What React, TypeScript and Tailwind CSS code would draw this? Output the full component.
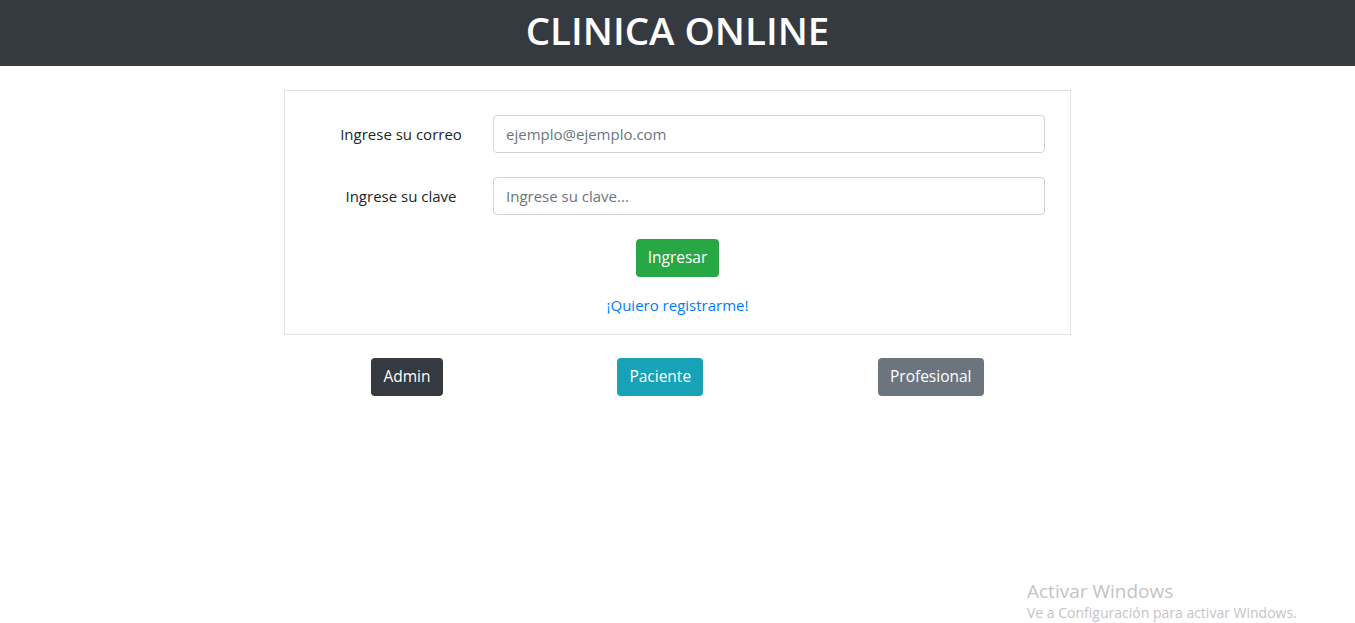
import React from "react";

const font = { fontFamily: '"Segoe UI", "Open Sans", sans-serif' };

function Field({ label, placeholder, type }: { label: string; placeholder: string; type: string }) {
  return (
    <div className="flex items-center">
      <label className="w-[184px] text-center text-[15px] text-[#212529]">{label}</label>
      <input
        type={type}
        placeholder={placeholder}
        className="h-[38px] w-[552px] rounded-[4px] border border-[#ced4da] bg-white px-3 text-[15px] text-[#495057] outline-none placeholder:text-[#6c757d]"
      />
    </div>
  );
}

export default function App() {
  return (
    <div className="relative min-h-[623px] bg-white" style={font}>
      <header className="flex h-[66px] items-center justify-center bg-[#343a40] pb-[5px]">
        <h1 className="text-[38.5px] font-semibold leading-none text-white">CLINICA ONLINE</h1>
      </header>

      <div className="mx-auto mt-[24px] w-[787px]">
        <div className="flex flex-col gap-[24px] border border-[#dee2e6] pb-[17px] pl-[24px] pt-[24px]">
          <Field label="Ingrese su correo" placeholder="ejemplo@ejemplo.com" type="email" />
          <Field label="Ingrese su clave" placeholder="Ingrese su clave..." type="password" />
          <div className="flex flex-col items-center gap-[16px] pr-[24px]">
            <button className="h-[38px] rounded-[4px] bg-[#28a745] px-3 text-[15.5px] text-white">Ingresar</button>
            <a href="#" className="text-[15px] leading-[24px] text-[#007bff]">¡Quiero registrarme!</a>
          </div>
        </div>

        <div className="mt-[23px] flex justify-around">
          <button className="h-[38px] rounded-[4px] bg-[#343a40] px-3 text-[15.5px] text-white">Admin</button>
          <button className="h-[38px] rounded-[4px] bg-[#17a2b8] px-3 text-[15.5px] text-white">Paciente</button>
          <button className="h-[38px] rounded-[4px] bg-[#6c757d] px-3 text-[15.5px] text-white">Profesional</button>
        </div>
      </div>

      <div className="absolute left-[1027px] top-[578px] text-[#c4c4c4]">
        <p className="text-[19px] leading-[26px]">Activar Windows</p>
        <p className="text-[14px] leading-[18px]">Ve a Configuración para activar Windows.</p>
      </div>
    </div>
  );
}
